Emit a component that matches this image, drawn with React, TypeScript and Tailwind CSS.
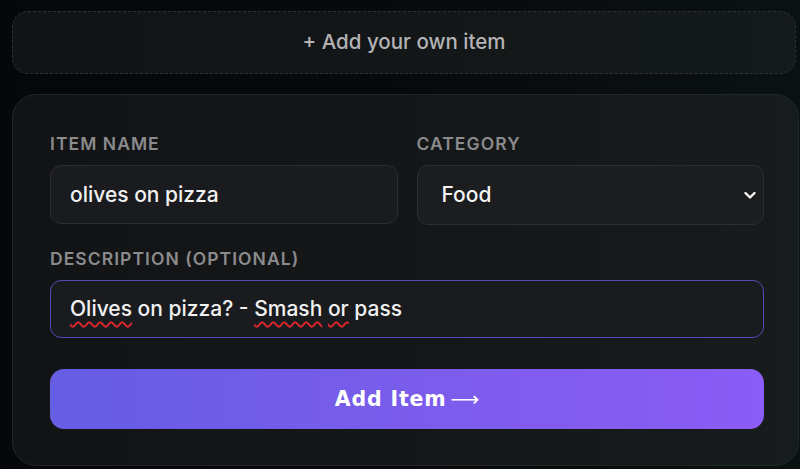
import { useState } from 'react';

function Label({ children }: { children: React.ReactNode }) {
  return (
    <div className="text-[17.5px] leading-6 font-semibold tracking-[0.06em] text-[#8b8b8d] uppercase mb-[9px]">
      {children}
    </div>
  );
}

function Squiggle({ children }: { children: React.ReactNode }) {
  return (
    <span className="underline decoration-wavy decoration-[#e0262c] decoration-[1.5px] underline-offset-[5px]">
      {children}
    </span>
  );
}

export default function App() {
  const [name, setName] = useState('olives on pizza');
  const [category, setCategory] = useState('Food');

  return (
    <div
      className="w-[800px] h-[469px] overflow-hidden bg-gradient-to-r from-[#06070a] via-[#08090c] to-[#0a1211] pl-3 pt-[11px]"
      style={{ fontFamily: 'Inter, "Noto Sans", sans-serif' }}
    >
      {/* Add your own item */}
      <div className="w-[784px] h-[63px] rounded-[16px] border border-dashed border-[#2c2f31] bg-gradient-to-r from-[#121316] to-[#141a1a] flex items-center justify-center">
        <span className="text-[20.5px] font-medium text-[#b3b3b6]">+ Add your own item</span>
      </div>

      {/* Form card */}
      <div className="mt-[20px] w-[787px] h-[372px] rounded-[24px] border border-[#222527] bg-gradient-to-r from-[#121315] to-[#161b1b] pl-[37px] pr-[34px] pt-[37px]">
        <div className="grid grid-cols-2 gap-[19px]">
          <div>
            <Label>Item Name</Label>
            <input
              value={name}
              onChange={(e) => setName(e.target.value)}
              className="w-full h-[59px] rounded-[11px] border border-[#2b2d30] bg-[#1a1b1e] px-[19px] text-[21px] font-medium text-[#f1f1f2] outline-none"
            />
          </div>
          <div>
            <Label>Category</Label>
            <div className="relative">
              <select
                value={category}
                onChange={(e) => setCategory(e.target.value)}
                className="appearance-none w-full h-[60px] rounded-[11px] border border-[#2b2d30] bg-[#1b1d1f] pl-[24px] text-[21px] font-medium text-[#f4f4f5] outline-none"
              >
                <option>Food</option>
                <option>Music</option>
                <option>Movies</option>
              </select>
              <svg
                className="absolute right-[8px] top-[26px] pointer-events-none"
                width="12"
                height="9"
                viewBox="0 0 12 9"
                fill="none"
              >
                <path d="M1.5 2 L6 6.5 L10.5 2" stroke="#f4f4f5" strokeWidth="2.4" strokeLinecap="round" strokeLinejoin="round" />
              </svg>
            </div>
          </div>
        </div>

        <div className="mt-[22px]">
          <Label>Description (optional)</Label>
          <div className="w-full h-[58px] rounded-[11px] border border-[#534ab4] bg-[#1a1b1e] px-[19px] flex items-center text-[21px] font-medium text-[#f1f1f2]">
            <span>
              <Squiggle>Olives</Squiggle> on pizza? - <Squiggle>Smash</Squiggle> <Squiggle>or</Squiggle> pass
            </span>
          </div>
        </div>

        <button
          className="mt-[31px] w-full h-[60px] rounded-[14px] bg-gradient-to-r from-[#655de2] via-[#7a5cec] to-[#8b5cf6] text-white flex items-center justify-center gap-[4px]"
          style={{ fontFamily: '"DejaVu Sans", sans-serif' }}
        >
          <span className="text-[20.5px] font-bold tracking-[0.04em]">Add Item</span>
          <span className="text-[20px] font-normal">⟶</span>
        </button>
      </div>
    </div>
  );
}
